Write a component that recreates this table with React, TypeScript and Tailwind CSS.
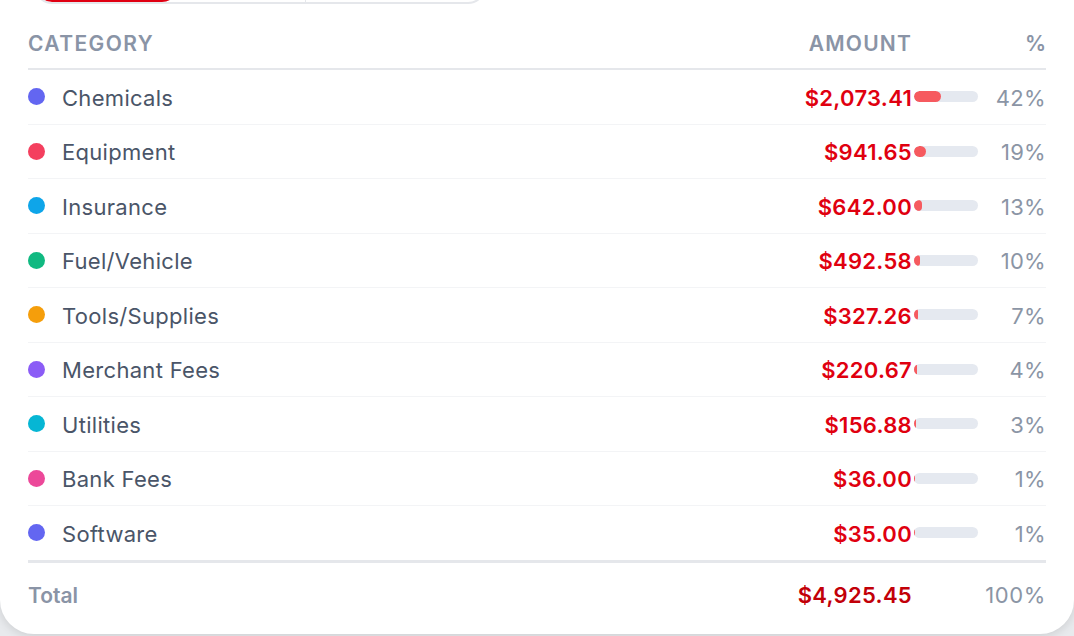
import React from "react";

const rows = [
  { name: "Chemicals", color: "bg-[#6366f1]", amount: "$2,073.41", pct: 42 },
  { name: "Equipment", color: "bg-[#f43f5e]", amount: "$941.65", pct: 19 },
  { name: "Insurance", color: "bg-[#0ea5e9]", amount: "$642.00", pct: 13 },
  { name: "Fuel/Vehicle", color: "bg-[#10b981]", amount: "$492.58", pct: 10 },
  { name: "Tools/Supplies", color: "bg-[#f59e0b]", amount: "$327.26", pct: 7 },
  { name: "Merchant Fees", color: "bg-[#8b5cf6]", amount: "$220.67", pct: 4 },
  { name: "Utilities", color: "bg-[#06b6d4]", amount: "$156.88", pct: 3 },
  { name: "Bank Fees", color: "bg-[#ec4899]", amount: "$36.00", pct: 1 },
  { name: "Software", color: "bg-[#6366f1]", amount: "$35.00", pct: 1 },
];

export default function App() {
  return (
    <div
      className="h-[636px] overflow-hidden bg-[#e8eaed]"
      style={{ fontFamily: "Inter, 'Noto Sans', sans-serif" }}
    >
      <div className="flow-root h-[634px] rounded-b-[34px] bg-white px-[28px] shadow-[0_2px_10px_rgba(0,0,0,0.12)]">
        {/* Period tabs (cut off at the top) */}
        <div className="-mt-[36px] ml-[6px] flex h-[40px] w-[452px] overflow-hidden rounded-[18px] border-2 border-[#e5e7eb] bg-white">
          <div className="w-[142px] rounded-[16px] bg-[#e00012]" />
          <div className="w-[128px] border-r border-[#e5e7eb]" />
          <div className="flex-1" />
        </div>

        {/* Header */}
        <div className="mt-[14px] flex h-[52px] items-center border-b-2 border-[#e5e7eb] pt-[2px] text-[21px] font-semibold uppercase text-[#8a94a6]">
          <div className="flex-1 tracking-[1.4px]">Category</div>
          <div className="text-right tracking-[1.2px]">Amount</div>
          <div className="w-[66px]" />
          <div className="w-[68px] text-right">%</div>
        </div>

        {/* Rows */}
        {rows.map((r, i) => (
          <div
            key={r.name}
            className={
              i === rows.length - 1
                ? "flex h-[56.5px] items-center border-b-[3px] border-[#e5e7eb] pt-[3px]"
                : "flex h-[54.5px] items-center border-b border-[#f3f4f6] pt-[3px]"
            }
          >
            <div className="flex flex-1 items-center gap-[17px]">
              <span className="-mt-[3px] flex">
                <span className={`h-[17px] w-[17px] rounded-full ${r.color}`} />
              </span>
              <span className="text-[22px] tracking-[0.3px] text-[#4a5568]">{r.name}</span>
            </div>
            <div className="text-right text-[22px] font-semibold tracking-[0.3px] text-[#e0000f]">
              {r.amount}
            </div>
            <div className="-mt-[3px] w-[66px] pl-[2px]">
              <div className="h-[11px] w-[64px] overflow-hidden rounded-full bg-[#e5e9f0]">
                <div
                  className="h-full rounded-full bg-[#f65a5f]"
                  style={{ width: `${(r.pct / 100) * 64}px` }}
                />
              </div>
            </div>
            <div className="w-[68px] text-right text-[22px] tracking-[0.3px] text-[#8b95a5]">{r.pct}%</div>
          </div>
        ))}

        {/* Total */}
        <div className="flex h-[66px] items-center">
          <div className="flex-1 text-[21px] font-semibold text-[#8a94a6]">Total</div>
          <div className="text-right text-[22px] font-semibold tracking-[0.3px] text-[#c20008]">$4,925.45</div>
          <div className="w-[66px]" />
          <div className="w-[68px] text-right text-[22px] tracking-[0.6px] text-[#8b95a5]">100%</div>
        </div>
      </div>
    </div>
  );
}
